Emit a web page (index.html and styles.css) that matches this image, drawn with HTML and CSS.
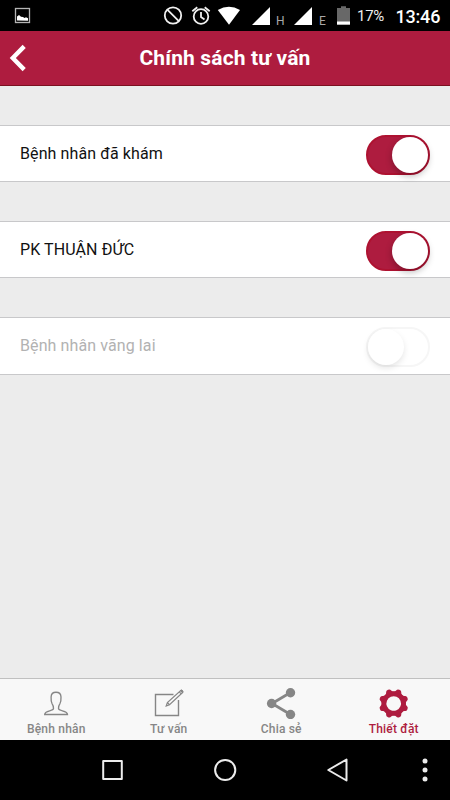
FILE: index.html
```html
<!DOCTYPE html>
<html lang="vi">
<head>
<meta charset="utf-8">
<title>Chính sách tư vấn</title>
<link rel="stylesheet" href="styles.css">
</head>
<body>
<div class="statusbar">
  <svg class="status-icons" width="450" height="31" viewBox="0 0 450 31">
    <rect x="15.500" y="8.500" width="14" height="14" fill="none" stroke="#b5b5b5" stroke-width="1.300"/>
    <path d="M17 20.500v-4l2-1.500 2 1.800 2 .2 1.500 1 1.500-.8 2 1v2.500z" fill="#fff"/>
    <g fill="none" stroke="#f0f0f0" stroke-width="1.800">
      <circle cx="173" cy="15.500" r="8.200"/><path d="M167.300 9.700l11.500 11.500"/>
      <circle cx="201" cy="16.500" r="7.300"/><path d="M201 12v5l3.500 2.500M192.300 11.200l5-3.900M209.700 11.200l-5-3.900"/>
    </g>
    <path d="M217.800 10Q229 3.500 240 10L229 24.700z" fill="#fff"/>
    <path d="M252 25L270 7v18zM294 25L312 7v18z" fill="#fff"/>
    <path d="M337 8h4V6.300h5V8h4v17h-13z" fill="#686868"/>
    <path d="M337 21.500h13V24.500h-13z" fill="#fff"/>
  </svg>
  <span class="net net-h">H</span>
  <span class="net net-e">E</span>
  <span class="percent">17%</span>
  <span class="clock">13:46</span>
</div>
<header class="header">
  <svg class="back" width="20" height="30" viewBox="0 0 20 30"><path d="M16.200 3.400L4.800 15l11.400 11.600" fill="none" stroke="#fff" stroke-width="4.400"/></svg>
  <h1>Chính sách tư vấn</h1>
</header>
<main class="content">
  <div class="row"><span>Bệnh nhân đã khám</span><i class="toggle on"></i></div>
  <div class="row"><span>PK THUẬN ĐỨC</span><i class="toggle on"></i></div>
  <div class="row disabled"><span>Bệnh nhân vãng lai</span><i class="toggle"></i></div>
</main>
<nav class="tabs">
  <a class="tab">
    <svg width="32" height="32" viewBox="0 0 32 32"><path d="M13.500 21.500C13.800 19 13 18 12 16.500C10.900 14.500 11 12.500 11.100 10C11.200 6.700 13 5.200 16 5.200S20.900 6.700 21 10C21.100 12.500 21.100 14.500 20 16.500C19 18 18.200 19 18.500 21.500C18.700 24.500 27.500 23.200 27.500 27.500H4.700C4.700 23.200 13.300 24.500 13.500 21.500z" fill="none" stroke="#868686" stroke-width="1.350"/></svg>
    <span>Bệnh nhân</span>
  </a>
  <a class="tab">
    <svg width="32" height="32" viewBox="0 0 32 32"><path d="M20.500 7.500H2.500v21h23V13" fill="none" stroke="#868686" stroke-width="1.400"/><path d="M13.200 19l1.200-3.500L27.700 3.500l2 2L16.500 17.800zM26.200 4.900l2 2M14.400 15.500l2.100 2.300" fill="none" stroke="#868686" stroke-width="1.200"/><path d="M27.700 3.500l1-.7 1.400 1.500-.7 1z" fill="#868686" stroke="#868686"/></svg>
    <span>Tư vấn</span>
  </a>
  <a class="tab">
    <svg width="32" height="32" viewBox="0 0 32 32"><path d="M25.500 5.500L7 16.500l18.500 11" fill="none" stroke="#868686" stroke-width="2.800"/><g fill="#868686"><circle cx="25.500" cy="5.700" r="4.700"/><circle cx="6.600" cy="16.500" r="4.700"/><circle cx="25.500" cy="27.500" r="4.700"/></g></svg>
    <span>Chia sẻ</span>
  </a>
  <a class="tab active">
    <svg width="32" height="32" viewBox="0 0 32 32">
      <defs><path id="tooth" d="M-4.800-10.500Q-2.900-12-2.600-13.400Q-2.200-14.900 0-14.900T2.600-13.400Q2.900-12 4.800-10.500z"/></defs>
      <g transform="translate(15.700 16.500) rotate(22.500)" fill="#ae1c3f">
        <circle r="9.800" fill="none" stroke="#ae1c3f" stroke-width="5"/>
        <use href="#tooth"/><use href="#tooth" transform="rotate(45)"/><use href="#tooth" transform="rotate(90)"/><use href="#tooth" transform="rotate(135)"/><use href="#tooth" transform="rotate(180)"/><use href="#tooth" transform="rotate(225)"/><use href="#tooth" transform="rotate(270)"/><use href="#tooth" transform="rotate(315)"/>
      </g>
    </svg>
    <span>Thiết đặt</span>
  </a>
</nav>
<div class="navbar">
  <svg width="450" height="60" viewBox="0 0 450 60">
    <g fill="none" stroke="#ececec" stroke-width="2" stroke-linejoin="round">
      <rect x="103.200" y="21" width="18.600" height="18"/>
      <circle cx="225.200" cy="30" r="10.100"/>
      <path d="M346.500 19.500v21L328.300 30z"/>
    </g>
    <g fill="#ececec"><circle cx="425" cy="21" r="2.500"/><circle cx="425" cy="30" r="2.500"/><circle cx="425" cy="39" r="2.500"/></g>
  </svg>
</div>
</body>
</html>
```

FILE: styles.css
```css
* { box-sizing: border-box; }
body {
  margin: 0;
  width: 450px;
  height: 800px;
  display: flex;
  flex-direction: column;
  overflow: hidden;
  background: #ececec;
  font-family: Roboto, "Noto Sans", sans-serif;
}
svg { display: block; }
.statusbar { position: relative; height: 31px; background: #000; color: #fff; }
.statusbar span { position: absolute; line-height: 20px; white-space: nowrap; }
.net { top: 11px; font-size: 12px; color: #a8a8a8; }
.net-h { left: 276px; }
.net-e { left: 319px; }
.percent { left: 357px; top: 6px; font-size: 15px; color: #eee; letter-spacing: -0.3px; }
.clock { left: 395.500px; top: 7px; font-size: 18px; font-weight: 500; letter-spacing: -0.2px; }
.header {
  position: relative;
  height: 55px;
  display: flex;
  align-items: center;
  justify-content: center;
  background: #ae1c3f;
  border-bottom: 1px solid #7c1020;
  color: #fff;
}
.back { position: absolute; left: 8px; top: 12px; }
.header h1 { margin: 0; font-size: 21px; line-height: 24px; font-weight: 700; letter-spacing: 0.15px; }
.content {
  flex: 1;
  display: flex;
  flex-direction: column;
  gap: 39px;
  padding-top: 39px;
}
.row {
  height: 57.200px;
  display: flex;
  align-items: center;
  justify-content: space-between;
  padding: 0 20px;
  background: #fff;
  border-top: 1px solid #c8c8ca;
  border-bottom: 1px solid #c8c8ca;
  color: #111;
  font-size: 16px;
  letter-spacing: 0.1px;
}
.row span { line-height: 20px; margin-top: 1px; }
.disabled { color: #b2b2b2; }
.toggle {
  width: 64px;
  height: 40px;
  margin-top: 2.400px;
  display: flex;
  border-radius: 20px;
  border: 2px solid #f6f6f6;
  background: #fff;
}
.toggle::before {
  content: "";
  width: 36px;
  height: 36px;
  border-radius: 50%;
  background: #fff;
  box-shadow: 0 3px 6px rgba(0, 0, 0, 0.1);
}
.toggle.on { justify-content: flex-end; background: #ae1c3f; border-color: #ae1231; }
.toggle.on::before { box-shadow: 0 3px 7px rgba(0, 0, 0, 0.28); }
.tabs {
  height: 62px;
  display: flex;
  background: #f8f8f8;
  border-top: 1px solid #c0c0c0;
}
.tab {
  flex: 1;
  display: flex;
  flex-direction: column;
  align-items: center;
  padding-top: 8px;
  color: #868686;
  font-size: 12px;
  font-weight: 500;
  letter-spacing: 0.2px;
}
.tab span { line-height: 16px; margin-top: 2px; }
.tab.active { color: #ae1c3f; }
.navbar { height: 60px; background: #000; }
```
